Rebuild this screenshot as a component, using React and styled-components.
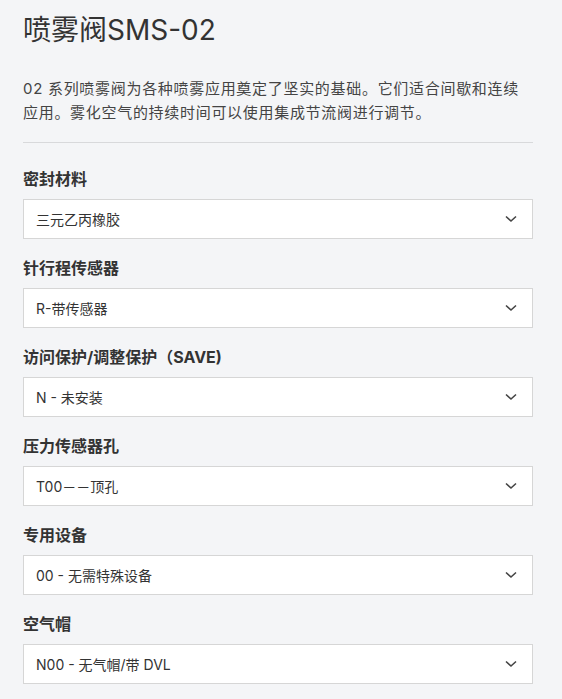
import React from "react";
import styled, { createGlobalStyle } from "styled-components";

const Global = createGlobalStyle`
  html, body { margin: 0; padding: 0; background: #f4f5f7; }
  body { font-family: Inter, "Noto Sans CJK SC", sans-serif; color: #333; }
`;

const Page = styled.div`
  width: 510px;
  padding: 12px 29px 20px 23px;
`;

const Title = styled.h1`
  margin: 0 0 29px;
  font-size: 28px;
  line-height: 36px;
  font-weight: 400;
  color: #333;
`;

const Desc = styled.p`
  margin: 0 0 17px;
  font-size: 15px;
  line-height: 24px;
  letter-spacing: 0.7px;
  color: #444;
`;

const Divider = styled.hr`
  margin: 0 0 24px;
  border: 0;
  border-top: 1px solid #d8d9db;
`;

const Fields = styled.div`
  display: flex;
  flex-direction: column;
  gap: 17px;
`;

const Field = styled.div`
  display: flex;
  flex-direction: column;
  gap: 8px;
`;

const Label = styled.div`
  font-size: 16px;
  line-height: 24px;
  font-weight: 700;
  color: #333;
`;

const Select = styled.div`
  box-sizing: border-box;
  height: 40px;
  display: flex;
  align-items: center;
  justify-content: space-between;
  padding: 0 15px 0 12px;
  background: #fff;
  border: 1px solid #d6d6d6;
  font-size: 14px;
  color: #333;
`;

const Chevron = () => (
  <svg width="12" height="8" viewBox="0 0 12 8" aria-hidden="true">
    <path d="M1 1.5 L6 6 L11 1.5" fill="none" stroke="#444" strokeWidth="1.6" />
  </svg>
);

const fields = [
  ["密封材料", "三元乙丙橡胶"],
  ["针行程传感器", "R-带传感器"],
  ["访问保护/调整保护（SAVE)", "N - 未安装"],
  ["压力传感器孔", "T00－－顶孔"],
  ["专用设备", "00 - 无需特殊设备"],
  ["空气帽", "N00 - 无气帽/带 DVL"],
];

export default function App() {
  return (
    <>
      <Global />
      <Page>
        <Title>喷雾阀SMS-02</Title>
        <Desc>
          02 系列喷雾阀为各种喷雾应用奠定了坚实的基础。它们适合间歇和连续应用。雾化空气的持续时间可以使用集成节流阀进行调节。
        </Desc>
        <Divider />
        <Fields>
          {fields.map(([label, value]) => (
            <Field key={label}>
              <Label>{label}</Label>
              <Select>
                <span>{value}</span>
                <Chevron />
              </Select>
            </Field>
          ))}
        </Fields>
      </Page>
    </>
  );
}
